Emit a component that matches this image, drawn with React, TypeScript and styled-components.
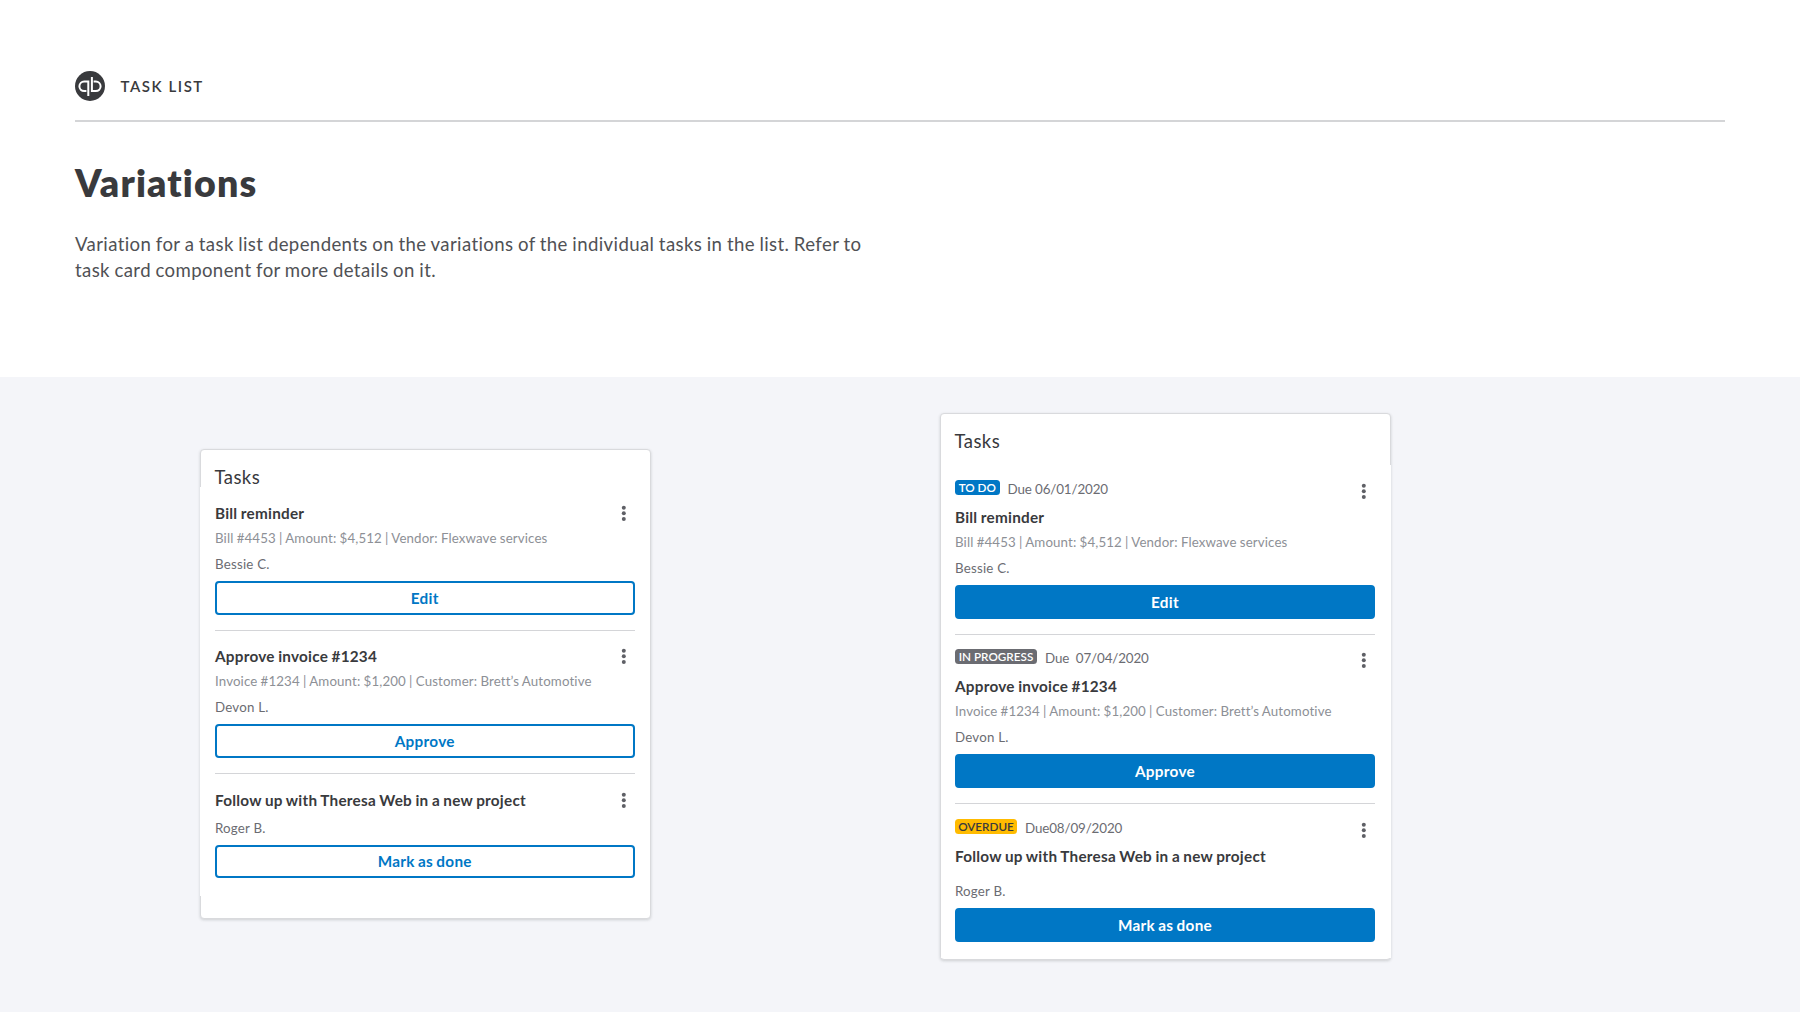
import React from "react";
import styled, { createGlobalStyle, css } from "styled-components";

const GlobalStyle = createGlobalStyle`
  *, *::before, *::after { box-sizing: border-box; }
  body {
    margin: 0;
    background: #fff;
    color: #393a3d;
    font-family: "Lato", "Open Sans", sans-serif;
    font-kerning: normal;
  }
`;

const Page = styled.div`
  display: flex;
  flex-direction: column;
  height: 1012px;
  overflow: hidden;
`;

const Intro = styled.header`
  flex: none;
  height: 377px;
  padding: 71px 75px 0;
`;

const Brand = styled.div`
  display: flex;
  align-items: center;
  gap: 15.5px;
  height: 51px;
  padding-bottom: 19px;
  border-bottom: 2px solid #d4d5d7;
`;

const BrandName = styled.span`
  font-size: 15px;
  line-height: 20px;
  font-weight: 600;
  letter-spacing: 1.55px;
`;

const Heading = styled.h1`
  margin: 38px 0 0;
  font-size: 37.5px;
  line-height: 46px;
  font-weight: 800;
  letter-spacing: 1.15px;
`;

const Lead = styled.p`
  width: 800px;
  margin: 25px 0 0;
  font-size: 18.6px;
  line-height: 26.3px;
  color: #505155;
  letter-spacing: 0.38px;
  word-spacing: -0.6px;
`;

const Stage = styled.main`
  flex: 1;
  display: flex;
  align-items: flex-start;
  gap: 289px;
  padding-left: 200px;
  background: #f4f5f9;
`;

const Card = styled.section<{ $top: number; $height: number }>`
  width: 451px;
  height: ${(p) => p.$height}px;
  margin-top: ${(p) => p.$top}px;
  background: #fff;
  border: 1px solid #d9dadd;
  border-radius: 4px;
  box-shadow: 0 1px 3px rgba(57, 58, 61, 0.2);
`;

const CardTitle = styled.h2<{ $height: number }>`
  margin: 0;
  height: ${(p) => p.$height}px;
  padding: 17px 13.5px 0;
  font-size: 18.5px;
  line-height: 20px;
  font-weight: 400;
  letter-spacing: 0.45px;
`;

const List = styled.ul<{ $shift: "left" | "right" }>`
  list-style: none;
  background: #fff;
  ${(p) =>
    p.$shift === "left"
      ? css`
          margin: 0 0 0 -1px;
          padding: 14px 15.5px 18px 15px;
        `
      : css`
          margin: 0 -1px 0 0;
          padding: 14px 16px 16px 14px;
        `}
`;

const Item = styled.li`
  display: grid;
  grid-template-columns: 1fr 24px;
  & + & {
    margin-top: 15.3px;
    padding-top: 13.5px;
    border-top: 1px solid #d4d5d8;
  }
`;

const Details = styled.div`
  min-width: 0;
`;

const Meta = styled.div`
  display: flex;
  align-items: flex-start;
  gap: 8px;
  height: 20px;
  margin-bottom: 6px;
`;

type Tone = "todo" | "progress" | "overdue";

const tones: Record<Tone, { bg: string; fg: string }> = {
  todo: { bg: "#0077c5", fg: "#fff" },
  progress: { bg: "#6b6c72", fg: "#fff" },
  overdue: { bg: "#ffbb00", fg: "#393a3d" },
};

const Badge = styled.span<{ $tone: Tone; $width: number }>`
  width: ${(p) => p.$width}px;
  height: 15px;
  margin-top: 1px;
  border-radius: 3.5px;
  background: ${(p) => tones[p.$tone].bg};
  color: ${(p) => tones[p.$tone].fg};
  font-size: 11.7px;
  line-height: 14px;
  font-weight: 600;
  text-align: center;
  white-space: nowrap;
`;

const Due = styled.span`
  font-size: 13.4px;
  line-height: 20px;
  color: #6b6c72;
  letter-spacing: -0.13px;
  white-space: pre;
`;

const TaskTitle = styled.h3`
  margin: 0;
  font-size: 15.3px;
  line-height: 24px;
  font-weight: 700;
  letter-spacing: 0.24px;
  word-spacing: -0.5px;
`;

const Summary = styled.p`
  margin: 3px 0 0;
  font-size: 13.3px;
  line-height: 20px;
  color: #8d9096;
  letter-spacing: 0.12px;
  word-spacing: -0.3px;
  white-space: nowrap;
`;

const Assignee = styled.p<{ $gap: number }>`
  margin: ${(p) => p.$gap}px 0 0;
  font-size: 13.3px;
  line-height: 20px;
  color: #6b6c72;
  letter-spacing: 0.22px;
`;

const MenuButton = styled.button`
  justify-self: end;
  width: 24px;
  height: 24px;
  margin-top: 1px;
  padding: 0;
  border: 0;
  background: none;
  svg {
    display: block;
  }
`;

const Action = styled.button<{ $solid: boolean }>`
  grid-column: 1 / -1;
  height: 33.5px;
  margin-top: 7px;
  padding: 0;
  border: 2px solid #0077c5;
  border-radius: 4px;
  background: ${(p) => (p.$solid ? "#0077c5" : "#fff")};
  color: ${(p) => (p.$solid ? "#fff" : "#0077c5")};
  font: 700 15.3px/28px "Lato", "Open Sans", sans-serif;
  letter-spacing: 0.3px;
  word-spacing: -0.8px;
`;

interface Task {
  title: string;
  summary?: string;
  assignee: string;
  action: string;
  badge?: { label: string; tone: Tone; width: number };
  due?: string;
}

const tasks: Task[] = [
  {
    title: "Bill reminder",
    summary: "Bill #4453 | Amount: $4,512 | Vendor: Flexwave services",
    assignee: "Bessie C.",
    action: "Edit",
    badge: { label: "TO DO", tone: "todo", width: 44.5 },
    due: "Due 06/01/2020",
  },
  {
    title: "Approve invoice #1234",
    summary: "Invoice #1234 | Amount: $1,200 | Customer: Brett’s Automotive",
    assignee: "Devon L.",
    action: "Approve",
    badge: { label: "IN PROGRESS", tone: "progress", width: 82 },
    due: "Due  07/04/2020",
  },
  {
    title: "Follow up with Theresa Web in a new project",
    assignee: "Roger B.",
    action: "Mark as done",
    badge: { label: "OVERDUE", tone: "overdue", width: 62 },
    due: "Due08/09/2020",
  },
];

function Logo() {
  return (
    <svg width="30" height="30" viewBox="0 0 30 30" aria-hidden="true">
      <circle cx="15" cy="15" r="15" fill="#393a3d" />
      <g fill="none" stroke="#fff" strokeWidth="2">
        <path d="M11.4 20.1H9.2a4.8 4.8 0 0 1 0-9.6h4.1V25" />
        <path d="M18.6 20.1h2.2a4.8 4.8 0 0 0 0-9.6h-2.2M16.9 6v14.1h3" />
      </g>
    </svg>
  );
}

function Dots() {
  return (
    <svg width="24" height="24" viewBox="0 0 24 24" fill="#5f6066" aria-hidden="true">
      <circle cx="12.8" cy="5.7" r="2" />
      <circle cx="12.8" cy="11.3" r="2" />
      <circle cx="12.8" cy="16.9" r="2" />
    </svg>
  );
}

function TaskItem({ task, detailed }: { task: Task; detailed: boolean }) {
  return (
    <Item>
      <Details>
        {detailed && task.badge && (
          <Meta>
            <Badge $tone={task.badge.tone} $width={task.badge.width}>
              {task.badge.label}
            </Badge>
            <Due>{task.due}</Due>
          </Meta>
        )}
        <TaskTitle>{task.title}</TaskTitle>
        {task.summary && <Summary>{task.summary}</Summary>}
        <Assignee $gap={detailed && !task.summary ? 13.8 : 6}>{task.assignee}</Assignee>
      </Details>
      <MenuButton aria-label="More options">
        <Dots />
      </MenuButton>
      <Action $solid={detailed}>{task.action}</Action>
    </Item>
  );
}

export default function App() {
  return (
    <>
      <GlobalStyle />
      <Page>
        <Intro>
          <Brand>
            <Logo />
            <BrandName>TASK LIST</BrandName>
          </Brand>
          <Heading>Variations</Heading>
          <Lead>
            Variation for a task list dependents on the variations of the individual tasks in the
            list. Refer to task card component for more details on it.
          </Lead>
        </Intro>
        <Stage>
          <Card $top={72} $height={470}>
            <CardTitle $height={37}>Tasks</CardTitle>
            <List $shift="left">
              {tasks.map((t) => (
                <TaskItem key={t.title} task={t} detailed={false} />
              ))}
            </List>
          </Card>
          <Card $top={36} $height={547}>
            <CardTitle $height={51}>Tasks</CardTitle>
            <List $shift="right">
              {tasks.map((t) => (
                <TaskItem key={t.title} task={t} detailed />
              ))}
            </List>
          </Card>
        </Stage>
      </Page>
    </>
  );
}
